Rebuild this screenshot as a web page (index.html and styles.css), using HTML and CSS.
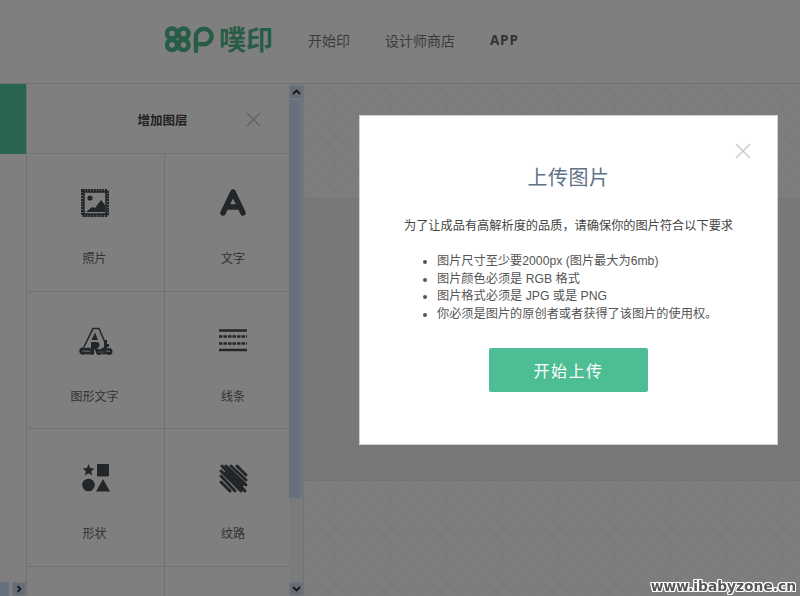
FILE: index.html
```html
<!DOCTYPE html>
<html lang="zh-CN">
<head>
    <meta charset="UTF-8">
    <meta name="viewport" content="width=device-width, initial-scale=1.0">
    <title>噗印</title>
    <link rel="stylesheet" href="styles.css">
</head>
<body>
    <header class="topbar">
        <div class="logo">
            <svg class="logo-mark" width="49" height="27" viewBox="0 0 49 27">
                <g fill="none" stroke="#4fb98f" stroke-width="4.500">
                    <circle cx="7" cy="7.500" r="5"/>
                    <circle cx="18.500" cy="7.500" r="5"/>
                    <circle cx="7" cy="19" r="5"/>
                    <circle cx="18.500" cy="19" r="5"/>
                    <path d="M31 25V10.500a7.800 7.800 0 1 1 7.800 7.800H35" stroke-linecap="round"/>
                </g>
            </svg>
            <span class="logo-text">噗印</span>
        </div>
        <nav class="nav">
            <a class="nav-item">开始印</a>
            <a class="nav-item">设计师商店</a>
            <a class="nav-item nav-app">APP</a>
        </nav>
    </header>

    <main class="workspace">
        <div class="tabs">
            <div class="tab-active"></div>
            <div class="hscroll">
                <span class="hscroll-thumb"></span>
                <span class="scroll-btn">
                    <svg width="8" height="8" viewBox="0 0 8 8"><path d="M2.500 1l3 3-3 3" fill="none" stroke="#333" stroke-width="1.800"/></svg>
                </span>
            </div>
        </div>

        <aside class="panel">
            <div class="panel-head">
                <h3 class="panel-title">增加图层</h3>
                <svg class="panel-close" width="15" height="15" viewBox="0 0 15 15"><path d="M1 1l13 13M14 1L1 14" stroke="#c3c9dc" stroke-width="1.500"/></svg>
            </div>
            <div class="layer-grid">
                <div class="layer-item">
                    <svg class="layer-icon" width="30" height="30" viewBox="0 0 30 30">
                        <rect x="2.500" y="2.500" width="25" height="25" fill="none" stroke="#474d52" stroke-width="3" stroke-dasharray="2.200 .6"/>
                        <rect x="4" y="4" width="22" height="22" fill="none" stroke="#474d52" stroke-width="1.500"/>
                        <circle cx="10" cy="10" r="2.600" fill="#474d52"/>
                        <path d="M6 24l6-5 3 1 6-8 4 5v7z" fill="#474d52"/>
                    </svg>
                    <span class="layer-label">照片</span>
                </div>
                <div class="layer-item">
                    <svg class="layer-icon" width="30" height="30" viewBox="0 0 30 30">
                        <path d="M5 25L15 4l10 21M9 19h12" fill="none" stroke="#474d52" stroke-width="5.500" stroke-linecap="round" stroke-linejoin="round"/>
                    </svg>
                    <span class="layer-label">文字</span>
                </div>
                <div class="layer-item">
                    <svg class="layer-icon" width="36" height="30" viewBox="0 0 36 30">
                        <path d="M7 21L16 2.500h6L30 21" fill="none" stroke="#474d52" stroke-width="1.600"/>
                        <path d="M14.500 14l3.500-7.500 3 7.500z" fill="#474d52"/>
                        <path d="M14 16h5c2.500 0 3.500 1 3.500 3s-1 3-2.500 3l3 4h-4l-2-3.500V26h-3zM27 14h3v4h2v3h-2v3h2v2h-5z" fill="#474d52"/>
                        <circle cx="6" cy="25" r="3.700" fill="#474d52"/>
                        <circle cx="11" cy="25" r="3.600" fill="#474d52"/>
                        <circle cx="15" cy="26.500" r="2.400" fill="#474d52"/>
                        <circle cx="22" cy="26" r="3" fill="#474d52"/>
                        <circle cx="27" cy="25" r="3.500" fill="#474d52"/>
                        <circle cx="32" cy="25.500" r="3.500" fill="#474d52"/>
                        <path d="M5 24.500h7l2 1.500H6zM21 25.500h5l1 1h-6zM29 24.500h4v1.500h-4z" fill="#a4a8ac"/>
                    </svg>
                    <span class="layer-label">图形文字</span>
                </div>
                <div class="layer-item">
                    <svg class="layer-icon" width="30" height="30" viewBox="0 0 30 30">
                        <g fill="none" stroke="#474d52" stroke-width="2.500">
                            <path d="M1 4.500h28M1 24h28"/>
                            <path d="M1 10.500h28M1 17.500h28" stroke-dasharray="3.500 1"/>
                        </g>
                    </svg>
                    <span class="layer-label">线条</span>
                </div>
                <div class="layer-item">
                    <svg class="layer-icon" width="30" height="30" viewBox="0 0 30 30">
                        <path d="M8.500 1l1.700 4 4.300.4-3.300 2.800 1 4.300-3.700-2.300-3.700 2.300 1-4.300L2.500 5.400l4.300-.4z" fill="#474d52"/>
                        <rect x="17" y="1" width="12" height="12.500" rx="1" fill="#474d52"/>
                        <circle cx="8.500" cy="22" r="6.300" fill="#474d52"/>
                        <path d="M23 16l7 12.500H16z" fill="#474d52"/>
                    </svg>
                    <span class="layer-label">形状</span>
                </div>
                <div class="layer-item">
                    <svg class="layer-icon" width="30" height="30" viewBox="0 0 30 30">
                        <g stroke="#474d52" stroke-width="3" stroke-linecap="round">
                            <path d="M8 3l20 19M4 3l23 25M3 8l20 20M3 13l14 15M3 19l9 9M13 3l15 14M19 3l9 9"/>
                        </g>
                        <path d="M5 11l6-7 17 16-6 7z" fill="#474d52"/>
                    </svg>
                    <span class="layer-label">纹路</span>
                </div>
                <div class="layer-item"></div>
                <div class="layer-item"></div>
            </div>
        </aside>

        <div class="vscroll">
            <span class="scroll-btn">
                <svg width="9" height="8" viewBox="0 0 9 8"><path d="M1 6l3.500-3.500L8 6" fill="none" stroke="#333" stroke-width="1.800"/></svg>
            </span>
            <span class="vscroll-thumb"></span>
            <span class="scroll-btn">
                <svg width="9" height="8" viewBox="0 0 9 8"><path d="M1 2l3.500 3.500L8 2" fill="none" stroke="#333" stroke-width="1.800"/></svg>
            </span>
        </div>

        <section class="canvas">
            <div class="canvas-band"></div>
        </section>
    </main>

    <div class="overlay">
        <div class="modal">
            <svg class="modal-close" width="16" height="16" viewBox="0 0 16 16"><path d="M1 1l14 14M15 1L1 15" stroke="#ccc" stroke-width="1.500"/></svg>
            <h2 class="modal-title">上传图片</h2>
            <p class="modal-intro">为了让成品有高解析度的品质，请确保你的图片符合以下要求</p>
            <ul class="modal-list">
                <li>图片尺寸至少要2000px (图片最大为6mb)</li>
                <li>图片颜色必须是 RGB 格式</li>
                <li>图片格式必须是 JPG 或是 PNG</li>
                <li>你必须是图片的原创者或者获得了该图片的使用权。</li>
            </ul>
            <button class="upload-btn">开始上传</button>
        </div>
    </div>

    <div class="watermark">www.ibabyzone.cn</div>
</body>
</html>
```

FILE: styles.css
```css
* {
    box-sizing: border-box;
}
html, body {
    height: 100%;
}
body {
    margin: 0;
    height: 596px;
    overflow: hidden;
    background-color: #fff;
    font-family: "Liberation Sans", "Noto Sans CJK SC", sans-serif;
    color: #666;
    display: flex;
    flex-direction: column;
}

/* top bar */
.topbar {
    height: 84px;
    flex: none;
    display: flex;
    align-items: center;
    padding-left: 165px;
    border-bottom: 1px solid #dfe2ec;
}
.logo {
    display: flex;
    align-items: center;
    gap: 5px;
    margin-top: -5px;
}
.logo-text {
    font-family: "Noto Sans CJK SC", sans-serif;
    font-size: 27px;
    line-height: 30px;
    font-weight: 700;
    color: #4fb98f;
}
.nav {
    display: flex;
    align-items: center;
    gap: 35px;
    margin-left: 35px;
    margin-top: -3px;
}
.nav-item {
    font-size: 14px;
    color: #777;
}
.nav-app {
    font-family: "Open Sans", sans-serif;
    font-weight: 700;
    font-size: 13.500px;
    letter-spacing: .8px;
    color: #666;
}

/* workspace */
.workspace {
    flex: 1;
    display: flex;
    min-height: 0;
}
.tabs {
    width: 27px;
    flex: none;
    display: flex;
    flex-direction: column;
    justify-content: space-between;
    border-right: 1px solid #dfe2ec;
}
.tab-active {
    height: 70px;
    background-color: #52c89e;
}
.hscroll {
    height: 14px;
    display: flex;
    justify-content: space-between;
}
.hscroll-thumb {
    width: 9px;
    background-color: #cfe0ff;
}
.panel {
    width: 262px;
    flex: none;
    overflow: hidden;
}
.panel-head {
    height: 70px;
    position: relative;
    display: flex;
    align-items: center;
    justify-content: center;
    padding-top: 1px;
    border-bottom: 1px solid #dfe2ec;
}
.panel-title {
    margin: 0 0 0 9px;
    font-size: 12.500px;
    font-weight: 700;
    color: #444;
}
.panel-close {
    position: absolute;
    left: 219px;
    top: 28px;
}
.layer-grid {
    display: grid;
    grid-template-columns: 138px 138px;
    grid-auto-rows: 137.670px;
}
.layer-item {
    display: flex;
    flex-direction: column;
    align-items: center;
    padding: 34px 2px 0 0;
    border-bottom: 1px solid #dfe2ec;
    border-right: 1px solid #dfe2ec;
}
.layer-item:nth-child(even) {
    border-right: none;
}
.layer-icon {
    display: block;
}
.layer-label {
    margin-top: 33px;
    font-size: 12px;
    line-height: 17px;
    color: #666;
}

/* scrollbars */
.vscroll {
    width: 15px;
    flex: none;
    display: flex;
    flex-direction: column;
    gap: 1px;
    padding: 1px 1px 0 0;
    border-right: 1px solid #dfe2ec;
    background-color: #f4f6fb;
}
.vscroll-thumb {
    height: 398px;
    background-color: #cfe0ff;
    border-right: 3px solid #dbe8ff;
}
.vscroll .scroll-btn:last-child {
    margin-top: auto;
}
.scroll-btn {
    width: 14px;
    height: 14px;
    flex: none;
    display: flex;
    align-items: center;
    justify-content: center;
    background-color: #cdd9f0;
    border: 1px solid #e4eaf6;
    border-radius: 2px;
}

/* canvas */
.canvas {
    flex: 1;
    padding-top: 114px;
    background: repeating-conic-gradient(#f8f8f8 0 25%, #fcfcfc 0 50%) 0 0 / 14px 14px;
}
.canvas-band {
    height: 283px;
    background-color: #eef1ee;
    border-top: 1px dashed #dde6e8;
    border-bottom: 1px dashed #dde6e8;
}

/* modal */
.overlay {
    position: fixed;
    inset: 0;
    display: flex;
    justify-content: flex-end;
    align-items: flex-start;
    padding: 115px 22px 0 0;
    background-color: rgba(0, 0, 0, .5);
}
.modal {
    width: 419px;
    height: 330px;
    position: relative;
    display: flex;
    flex-direction: column;
    background-color: #fff;
    border: 1px solid #d0d0d0;
}
.modal-close {
    position: absolute;
    right: 26px;
    top: 27px;
}
.modal-title {
    margin: 48px 0 0;
    text-align: center;
    font-size: 20px;
    line-height: 28px;
    font-weight: 400;
    letter-spacing: .5px;
    color: #5f7288;
}
.modal-intro {
    margin: 25px 0 0;
    text-align: center;
    font-size: 12.200px;
    line-height: 18px;
    color: #444;
}
.modal-list {
    margin: 18px 0 0;
    padding-left: 77px;
    font-size: 12.200px;
    line-height: 17.600px;
    color: #555;
}
.upload-btn {
    width: 159px;
    height: 44px;
    margin: 25px auto 0;
    border: none;
    border-radius: 2px;
    background-color: #4dbd94;
    color: #fff;
    font-family: inherit;
    font-size: 16px;
    letter-spacing: 1.500px;
}

.watermark {
    position: fixed;
    right: 4px;
    bottom: 1px;
    font-family: "DejaVu Sans", sans-serif;
    font-size: 13.800px;
    line-height: 18px;
    font-weight: 700;
    color: #555;
    text-shadow: 1px 0 #fff, -1px 0 #fff, 0 1px #fff, 0 -1px #fff, 1px 1px #fff, -1px -1px #fff, 1px -1px #fff, -1px 1px #fff;
}
```
